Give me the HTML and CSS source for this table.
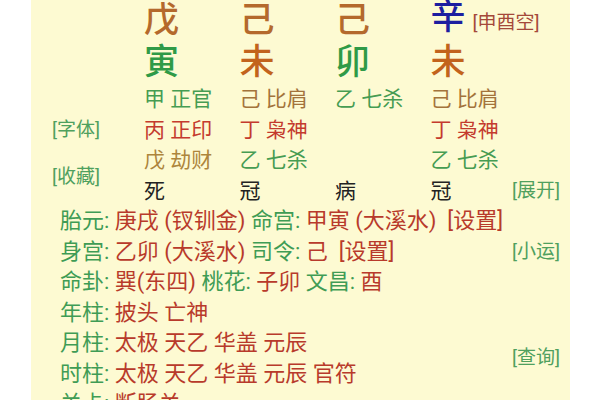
FILE: index.html
```html
<!DOCTYPE html>
<html lang="zh-CN">
<head>
<meta charset="utf-8">
<title>八字排盘</title>
<link rel="stylesheet" href="styles.css">
</head>
<body>
<div class="panel">
  <div class="pillars">
    <span class="big c2 r1 tan">戊</span>
    <span class="big c3 r1 tan">己</span>
    <span class="big c4 r1 tan">己</span>
    <span class="big c5 r1 navy">辛<span class="kong">[申酉空]</span></span>

    <span class="big c2 r2 green">寅</span>
    <span class="big c3 r2 orange">未</span>
    <span class="big c4 r2 green">卯</span>
    <span class="big c5 r2 orange">未</span>

    <span class="hid c2 r3 g">甲 正官</span>
    <span class="hid c3 r3 b">己 比肩</span>
    <span class="hid c4 r3 g">乙 七杀</span>
    <span class="hid c5 r3 b">己 比肩</span>

    <span class="link c1 r4 side">[字体]</span>
    <span class="hid c2 r4 r">丙 正印</span>
    <span class="hid c3 r4 r">丁 枭神</span>
    <span class="hid c5 r4 r">丁 枭神</span>

    <span class="link c1 r56 side">[收藏]</span>
    <span class="hid c2 r5 y">戊 劫财</span>
    <span class="hid c3 r5 g">乙 七杀</span>
    <span class="hid c5 r5 g">乙 七杀</span>

    <span class="hid c2 r6 k">死</span>
    <span class="hid c3 r6 k">冠</span>
    <span class="hid c4 r6 k">病</span>
    <span class="hid c5 r6 k">冠</span>
    <span class="link c5 r6 end">[展开]</span>
  </div>

  <div class="extra">
    <div class="line"><span class="lab">胎元:</span> <span class="val">庚戌 (钗钏金)</span> <span class="lab">命宫:</span> <span class="val">甲寅 (大溪水)&nbsp; [设置]</span></div>
    <div class="line split"><span><span class="lab">身宫:</span> <span class="val">乙卯 (大溪水)</span> <span class="lab">司令:</span> <span class="val">己&nbsp; [设置]</span></span><span class="link">[小运]</span></div>
    <div class="line"><span class="lab">命卦:</span> <span class="val">巽(东四)</span> <span class="lab">桃花:</span> <span class="val">子卯</span> <span class="lab">文昌:</span> <span class="val">酉</span></div>
    <div class="line"><span class="lab">年柱:</span> <span class="val">披头 亡神</span></div>
    <div class="pair">
      <div class="pair-lines">
        <div class="line"><span class="lab">月柱:</span> <span class="val">太极 天乙 华盖 元辰</span></div>
        <div class="line"><span class="lab">时柱:</span> <span class="val">太极 天乙 华盖 元辰 官符</span></div>
      </div>
      <span class="link">[查询]</span>
    </div>
    <div class="line"><span class="lab">关卡:</span> <span class="val">断肠关</span></div>
  </div>
</div>
</body>
</html>
```

FILE: styles.css
```css
html, body {
  margin: 0;
  padding: 0;
  background: #ffffff;
}

body {
  width: 600px;
  height: 400px;
  overflow: hidden;
  font-family: Roboto, "Noto Sans CJK SC", sans-serif;
}

.panel {
  margin-left: 31px;
  width: 539px;
  height: 400px;
  background: #fdfad2;
  box-sizing: border-box;
  padding-right: 10px;
  overflow: hidden;
}

.pillars {
  display: grid;
  grid-template-columns: 113px 95.5px 95.5px 95.5px 1fr;
  grid-template-rows: 41px 43px repeat(4, 30.5px);
}

.c1 { grid-column: 1; }
.c2 { grid-column: 2; }
.c3 { grid-column: 3; }
.c4 { grid-column: 4; }
.c5 { grid-column: 5; }
.r1 { grid-row: 1; }
.r2 { grid-row: 2; }
.r3 { grid-row: 3; }
.r4 { grid-row: 4; }
.r5 { grid-row: 5; }
.r6 { grid-row: 6; }
.r56 { grid-row: 5 / span 2; align-self: center; padding-top: 4px; }

.big {
  font-size: 35px;
  font-weight: 500;
  line-height: 40px;
  align-self: center;
  white-space: nowrap;
}

.kong {
  font-size: 19px;
  font-weight: 400;
  color: #a4483a;
  margin-left: 7px;
}

.hid {
  font-size: 21px;
  line-height: 30.5px;
  white-space: nowrap;
}

.link {
  font-size: 19px;
  line-height: 30.5px;
  color: #4fa05e;
  white-space: nowrap;
}

.side { padding-left: 21px; }
.end { justify-self: end; }

.tan { color: #b4692c; }
.orange { color: #c2631c; }
.green { color: #2f9a47; }
.navy { color: #1d1ea0; }

.g { color: #469c52; }
.b { color: #a3733b; }
.r { color: #c43a2e; }
.y { color: #ad853c; }
.k { color: #222222; }

.extra {
  padding-left: 29px;
}

.line {
  font-size: 22px;
  line-height: 30.5px;
  white-space: nowrap;
}

.split {
  display: flex;
  justify-content: space-between;
}

.split .link,
.pair .link {
  font-size: 19px;
}

.pair {
  display: flex;
  justify-content: space-between;
  align-items: center;
}

.lab { color: #3f9c55; }
.val { color: #b83a2b; }
```
